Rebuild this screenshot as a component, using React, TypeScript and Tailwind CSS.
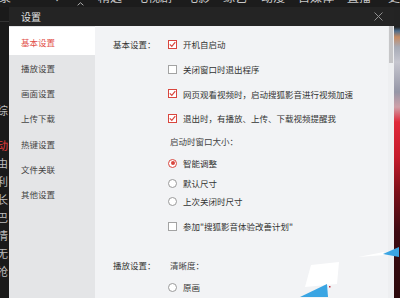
import React from 'react';

type Row = { label?: string; kind: 'check' | 'radio' | 'text'; on?: boolean; text: string; h: string };

const rows: Row[] = [
  { label: '基本设置：', kind: 'check', on: true, text: '开机自启动', h: 'h-[25px]' },
  { kind: 'check', on: false, text: '关闭窗口时退出程序', h: 'h-[25px]' },
  { kind: 'check', on: true, text: '网页观看视频时，启动搜狐影音进行视频加速', h: 'h-[24.5px]' },
  { kind: 'check', on: true, text: '退出时，有播放、上传、下载视频提醒我', h: 'h-[24px]' },
  { kind: 'text', text: '启动时窗口大小：', h: 'h-[22px]' },
  { kind: 'radio', on: true, text: '智能调整', h: 'h-[22px]' },
  { kind: 'radio', on: false, text: '默认尺寸', h: 'h-[18px]' },
  { kind: 'radio', on: false, text: '上次关闭时尺寸', h: 'h-[19px]' },
  { kind: 'check', on: false, text: '参加"搜狐影音体验改善计划"', h: 'h-[30px]' },
];

const menu = ['基本设置', '播放设置', '画面设置', '上传下载', '热键设置', '文件关联', '其他设置'];

function CheckBox({ on }: { on?: boolean }): React.JSX.Element {
  if (!on) return <span className="w-[9px] h-[9px] shrink-0 border border-[#a3a3a3] bg-white" />;
  return (
    <span className="w-[9px] h-[9px] shrink-0 border border-[#d9463e] bg-white flex items-center justify-center">
      <svg width="7" height="7" viewBox="0 0 7 7">
        <path d="M0.8 3.4 L2.8 5.4 L6.3 1.2" stroke="#d9463e" strokeWidth="1.2" fill="none" />
      </svg>
    </span>
  );
}

function Radio({ on }: { on?: boolean }): React.JSX.Element {
  return (
    <span
      className={
        on
          ? 'w-[9px] h-[9px] shrink-0 rounded-full border border-[#d9463e] bg-white flex items-center justify-center'
          : 'w-[9px] h-[9px] shrink-0 rounded-full border border-[#9a9a9a] bg-white'
      }
    >
      {on && <span className="w-[4px] h-[4px] rounded-full bg-[#d9463e]" />}
    </span>
  );
}

function OptionRow({ row }: { row: Row }): React.JSX.Element {
  return (
    <div className={`flex items-center ${row.h}`}>
      <span className="w-[55px] shrink-0 text-[#333]">{row.label}</span>
      {row.kind === 'text' ? (
        <span className="pl-[2px] text-[#444]">{row.text}</span>
      ) : (
        <>
          {row.kind === 'check' ? <CheckBox on={row.on} /> : <Radio on={row.on} />}
          <span className="ml-[6px] text-[#333] whitespace-nowrap">{row.text}</span>
        </>
      )}
    </div>
  );
}

const sideChars = ['由', '利', '长', '巴', '情', '无', '抢'];

function App(): React.JSX.Element {
  return (
    <div className="relative w-[400px] h-[298px] overflow-hidden bg-[#1b1b1b] font-['Noto_Sans_CJK_SC',sans-serif]">
      {/* player window behind the dialog */}
      <div className="h-[7px] overflow-hidden bg-[#1c1c1c]">
        <div className="flex items-start -mt-[10px] text-[12px] leading-[14px] text-[#c9c9c9] whitespace-nowrap">
          <span className="-ml-[13px]">记录</span>
          <span className="ml-[44px] text-[10px]">✓</span>
          <svg className="ml-[15px] mt-[11px]" width="11" height="6" viewBox="0 0 11 6">
            <path d="M1 5 L5.5 1 L10 5" stroke="#c9c9c9" strokeWidth="1.3" fill="none" />
          </svg>
          <span className="ml-[14px]">精选</span>
          <span className="ml-[14px]">电视剧</span>
          <span className="ml-[14px]">电影</span>
          <span className="ml-[13px]">综艺</span>
          <span className="ml-[14px]">动漫</span>
          <span className="ml-[13px]">自媒体</span>
          <span className="ml-[13px]">直播</span>
          <span className="ml-[17px]">更</span>
        </div>
      </div>

      <div className="flex h-[291px]">
        <div className="w-[9px] shrink-0 overflow-hidden bg-[#1a1a1a] text-[11px] leading-[18px] text-[#bdbdbd]">
          <div className="h-[15px] border-b border-[#333]" />
          <div className="mt-[79px] -ml-[3px]">综</div>
          <div className="mt-[17px] -ml-[3px] text-[#e23b3b]">动</div>
          {sideChars.map((c) => (
            <div key={c} className="-ml-[3px]">
              {c}
            </div>
          ))}
        </div>

        {/* settings dialog */}
        <div className="w-[385px] shrink-0 flex flex-col">
          <div className="h-[21px] flex items-center justify-between bg-[#242424] pl-[12px] pr-[11px]">
            <span className="text-[10px] text-[#e2e2e2]">设置</span>
            <svg width="9" height="9" viewBox="0 0 9 9">
              <path d="M0.5 0.5 L8.5 8.5 M8.5 0.5 L0.5 8.5" stroke="#8f8f8f" strokeWidth="1" />
            </svg>
          </div>

          <div className="flex flex-1 text-[8.5px] leading-none">
            <div className="w-[86px] shrink-0 bg-[#e4e5e7] pt-[1px]">
              {menu.map((m, i) =>
                i === 0 ? (
                  <div key={m} className="h-[28.33px] pt-[3px] flex items-center pl-[12px] bg-white text-[#e2514a]">
                    {m}
                  </div>
                ) : (
                  <div key={m} className="h-[25.33px] flex items-center pl-[12px] text-[#444]">
                    {m}
                  </div>
                ),
              )}
            </div>

            <div className="flex-1 bg-[#f2f3f5] pl-[18px] pt-[5.5px]">
              {rows.map((r) => (
                <OptionRow key={r.text} row={r} />
              ))}
              <div className="mt-[13px] h-[22px] flex items-center">
                <span className="w-[55px] shrink-0 text-[#333]">播放设置：</span>
                <span className="pl-[2px] text-[#444]">清晰度：</span>
              </div>
              <OptionRow row={{ kind: 'radio', on: false, text: '原画', h: 'h-[22px]' }} />
            </div>

            <div className="w-[6px] shrink-0 bg-[#eeeff1] flex justify-center">
              <div className="w-[4px] h-[37px] bg-[#c6c6c8]" />
            </div>
          </div>
        </div>

        <div className="w-[6px] shrink-0 bg-[linear-gradient(to_bottom,#232323_0px,#232323_20px,#4d6d8d_24px,#c58a62_30px,#a7abb6_40px,#c6c6cf_55px,#9596a6_85px,#cfa0a8_100px,#e0293a_115px,#c51b2b_150px,#7c1019_185px,#3d0b12_225px,#2b090c_291px)]" />
      </div>

      {/* annotation marks over the screenshot */}
      <svg className="absolute inset-0 pointer-events-none" width="400" height="298" viewBox="0 0 400 298">
        <polygon points="358,257 384,252 385,255" fill="#ffffff" />
        <polygon points="383,254 399,247 399,257" fill="#3aa5e3" />
        <polygon points="311,265 339,262 337,284 305,287" fill="#ffffff" />
        <polygon points="300,297 327,284 328,297" fill="#3aa5e3" />
        <rect x="329" y="286" width="1.5" height="1.5" fill="#c23040" />
      </svg>
    </div>
  );
}

export default App;
